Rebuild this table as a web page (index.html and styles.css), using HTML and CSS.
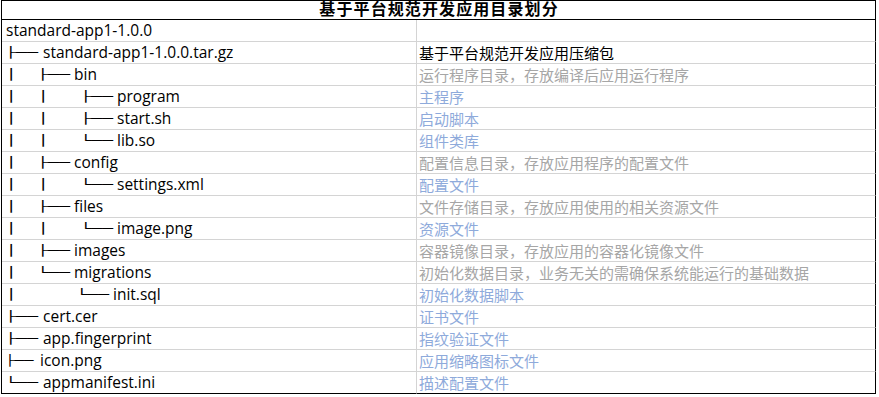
FILE: index.html
```html
<!DOCTYPE html>
<html lang="zh-CN">
<head>
<meta charset="utf-8">
<title>基于平台规范开发应用目录划分</title>
<link rel="stylesheet" href="styles.css">
</head>
<body>
<table class="sheet">
  <colgroup><col class="c-tree"><col class="c-desc"></colgroup>
  <thead>
    <tr><th colspan="2" class="title"><span class="title-text">基于平台规范开发应用目录划分</span></th></tr>
  </thead>
  <tbody>
    <tr><td><div class="tree root"><span class="name">standard-app1-1.0.0</span></div></td><td></td></tr>
    <tr><td><div class="tree"><span class="con"><i class="g">├──</i></span><span class="name">standard-app1-1.0.0.tar.gz</span></div></td><td class="desc main">基于平台规范开发应用压缩包</td></tr>
    <tr><td><div class="tree"><span class="bar b1"><i class="g">│</i></span><span class="con c2"><i class="g">├──</i></span><span class="name">bin</span></div></td><td class="desc dir">运行程序目录，存放编译后应用运行程序</td></tr>
    <tr><td><div class="tree"><span class="bar b1"><i class="g">│</i></span><span class="bar b2"><i class="g">│</i></span><span class="con c2"><i class="g">├──</i></span><span class="name">program</span></div></td><td class="desc file">主程序</td></tr>
    <tr><td><div class="tree"><span class="bar b1"><i class="g">│</i></span><span class="bar b2"><i class="g">│</i></span><span class="con c2"><i class="g">├──</i></span><span class="name">start.sh</span></div></td><td class="desc file">启动脚本</td></tr>
    <tr><td><div class="tree"><span class="bar b1"><i class="g">│</i></span><span class="bar b2"><i class="g">│</i></span><span class="con c2"><i class="g">└──</i></span><span class="name">lib.so</span></div></td><td class="desc file">组件类库</td></tr>
    <tr><td><div class="tree"><span class="bar b1"><i class="g">│</i></span><span class="con c2"><i class="g">├──</i></span><span class="name">config</span></div></td><td class="desc dir">配置信息目录，存放应用程序的配置文件</td></tr>
    <tr><td><div class="tree"><span class="bar b1"><i class="g">│</i></span><span class="bar b2"><i class="g">│</i></span><span class="con c2"><i class="g">└──</i></span><span class="name">settings.xml</span></div></td><td class="desc file">配置文件</td></tr>
    <tr><td><div class="tree"><span class="bar b1"><i class="g">│</i></span><span class="con c2"><i class="g">├──</i></span><span class="name">files</span></div></td><td class="desc dir">文件存储目录，存放应用使用的相关资源文件</td></tr>
    <tr><td><div class="tree"><span class="bar b1"><i class="g">│</i></span><span class="bar b2"><i class="g">│</i></span><span class="con c2"><i class="g">└──</i></span><span class="name">image.png</span></div></td><td class="desc file">资源文件</td></tr>
    <tr><td><div class="tree"><span class="bar b1"><i class="g">│</i></span><span class="con c2"><i class="g">├──</i></span><span class="name">images</span></div></td><td class="desc dir">容器镜像目录，存放应用的容器化镜像文件</td></tr>
    <tr><td><div class="tree"><span class="bar b1"><i class="g">│</i></span><span class="con c2"><i class="g">└──</i></span><span class="name">migrations</span></div></td><td class="desc dir">初始化数据目录，业务无关的需确保系统能运行的基础数据</td></tr>
    <tr><td><div class="tree"><span class="bar b1"><i class="g">│</i></span><span class="gap"></span><span class="con c2"><i class="g">└──</i></span><span class="name">init.sql</span></div></td><td class="desc file">初始化数据脚本</td></tr>
    <tr><td><div class="tree"><span class="con"><i class="g">├──</i></span><span class="name">cert.cer</span></div></td><td class="desc file">证书文件</td></tr>
    <tr><td><div class="tree"><span class="con"><i class="g">├──</i></span><span class="name">app.fingerprint</span></div></td><td class="desc file">指纹验证文件</td></tr>
    <tr><td><div class="tree"><span class="con short"><i class="g">├──</i></span><span class="name">icon.png</span></div></td><td class="desc file">应用缩略图标文件</td></tr>
    <tr class="last"><td><div class="tree"><span class="con"><i class="g">└──</i></span><span class="name">appmanifest.ini</span></div></td><td class="desc file">描述配置文件</td></tr>
  </tbody>
</table>
</body>
</html>
```
FILE: styles.css
```css
html, body {
  margin: 0;
  padding: 0;
  background: #ffffff;
}

body {
  font-family: "Open Sans", "Noto Sans CJK SC", sans-serif;
  font-size: 15px;
  color: #000000;
}

.sheet {
  margin-left: 1px;
  border-collapse: separate;
  border-spacing: 0;
  table-layout: fixed;
  border-top: 1px solid #000;
  border-left: 1px solid #000;
}

.c-tree { width: 415px; }
.c-desc { width: 459px; }

.title {
  height: 18px;
  padding: 0;
  font-family: "Liberation Sans", "Noto Sans CJK SC", sans-serif;
  font-weight: 700;
  font-size: 16px;
  line-height: 18px;
  text-align: center;
  border-right: 1px solid #000;
  border-bottom: 1px solid #000;
  white-space: nowrap;
}

.title-text {
  letter-spacing: 1.1px;
  margin-right: -1.1px;
}

td {
  height: 21px;
  padding: 0;
  line-height: 21px;
  vertical-align: middle;
  white-space: nowrap;
  overflow: hidden;
  border-bottom: 1px solid #d4d4d4;
  border-right: 1px solid #d4d4d4;
}

td + td {
  border-right-color: #000;
}

.last td {
  border-bottom-color: #000;
}

.tree {
  display: flex;
  align-items: center;
  height: 21px;
  padding-left: 7px;
}

.tree.root {
  padding-left: 4px;
}

.name {
  font-size: 15.5px;
}

.bar, .con, .gap {
  display: inline-block;
  flex: none;
  height: 21px;
  font-family: "DejaVu Sans", sans-serif;
  font-size: 15px;
  line-height: 21px;
}

.g {
  font-style: normal;
  display: inline-block;
  margin-left: -4px;
  transform: scale(1.22, 0.72);
  transform-origin: 0 50%;
}

.bar .g {
  transform: scale(1.3, 0.72);
}

.b1 { width: 32px; }
.b2 { width: 43px; }
.gap { width: 39px; }
.con { width: 34px; }
.con.c2 { width: 33px; }
.con.short { width: 31px; }
.con.short .g { transform: scale(1.05, 0.72); }

.desc {
  padding-left: 2px;
  font-family: "Noto Sans CJK SC", sans-serif;
  font-size: 15px;
}

.desc.main { color: #000000; }
.desc.dir { color: #a6a6a6; }
.desc.file { color: #8eaadb; }
```
